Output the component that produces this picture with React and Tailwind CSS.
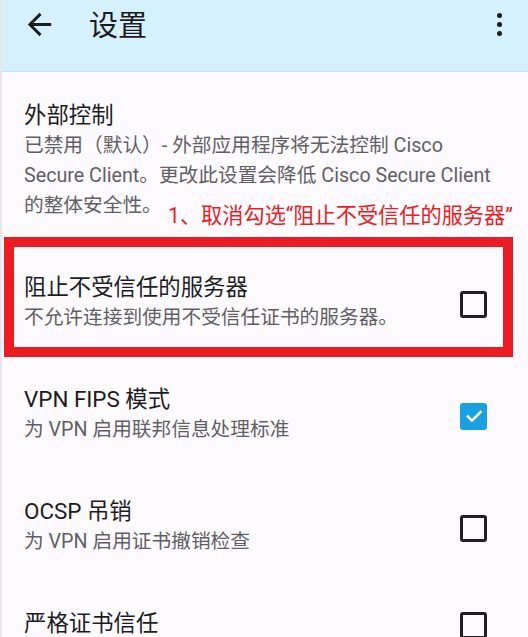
const items = [
  {
    title: '外部控制',
    desc: '已禁用（默认）- 外部应用程序将无法控制 Cisco Secure Client。更改此设置会降低 Cisco Secure Client 的整体安全性。',
  },
  { title: '阻止不受信任的服务器', desc: '不允许连接到使用不受信任证书的服务器。', checkbox: true, checked: false, marked: true },
  { title: 'VPN FIPS 模式', desc: '为 VPN 启用联邦信息处理标准', checkbox: true, checked: true },
  { title: 'OCSP 吊销', desc: '为 VPN 启用证书撤销检查', checkbox: true, checked: false },
  { title: '严格证书信任', desc: '', checkbox: true, checked: false },
]

const Checkbox = ({ checked }) =>
  checked ? (
    <div className="w-[27px] h-[27px] rounded-[3px] bg-[#1ba1e2] flex items-center justify-center">
      <svg width="20" height="20" viewBox="0 0 24 24" fill="none" stroke="#fff" strokeWidth="3.2" strokeLinecap="round" strokeLinejoin="round">
        <path d="M4.5 12.5l5 5L20 7" />
      </svg>
    </div>
  ) : (
    <div className="w-[27px] h-[27px] rounded-[3px] border-[3px] border-[#1f1f22]" />
  )

export default function App() {
  return (
    <div className="w-[528px] h-[637px] overflow-hidden bg-[#fdfbfe] border-l-2 border-[#e9e7eb]" style={{ fontFamily: 'Roboto, "Noto Sans CJK SC", sans-serif' }}>
      <header className="h-[72px] bg-[#d5f1fd] border-b border-[#c9e2ec] flex items-start pt-[7px] pl-[22px] pr-[28px] -ml-[2px]">
        <svg width="35" height="35" viewBox="0 0 24 24" className="text-[#1c1b1f]" fill="currentColor">
          <path d="M20 11H7.83l5.59-5.59L12 4l-8 8 8 8 1.41-1.41L7.83 13H20v-2z" />
        </svg>
        <h1 className="ml-[32px] text-[29px] text-[#1c1b1f] leading-[38px]">设置</h1>
        <div className="ml-auto mr-[-2px] mt-[6px] flex flex-col gap-[4px] items-center">
          <span className="w-[5px] h-[5px] rounded-full bg-[#1c1b1f]" />
          <span className="w-[5px] h-[5px] rounded-full bg-[#1c1b1f]" />
          <span className="w-[5px] h-[5px] rounded-full bg-[#1c1b1f]" />
        </div>
      </header>
      <div className="pt-[2px]">
        {items.map((it, i) => (
          <div key={i} className="relative">
            <div className={`flex items-center pl-[22px] py-[25px] ${it.checkbox ? 'pr-[41px]' : 'pr-[24px]'}`}>
              <div className="flex-1">
                <div className="text-[22.4px] leading-[32px] text-[#1c1b1f]">{it.title}</div>
                {it.desc && (
                  <div className="text-[19.7px] leading-[30px] text-[#615f65]">{it.desc}</div>
                )}
              </div>
              {it.checkbox && (
                <div className="ml-4 pt-[4px]">
                  <Checkbox checked={it.checked} />
                </div>
              )}
            </div>
            {i === 0 && (
              <div className="absolute left-[166px] top-[130px] text-[21.2px] leading-[24px] text-[#ec1c24] whitespace-nowrap">
                1、取消勾选“阻止不受信任的服务器”
              </div>
            )}
            {it.marked && (
              <div className="absolute left-[2px] right-[15px] top-[-9px] bottom-[1px] border-[10px] border-[#ec1c24] pointer-events-none" />
            )}
          </div>
        ))}
      </div>
    </div>
  )
}
